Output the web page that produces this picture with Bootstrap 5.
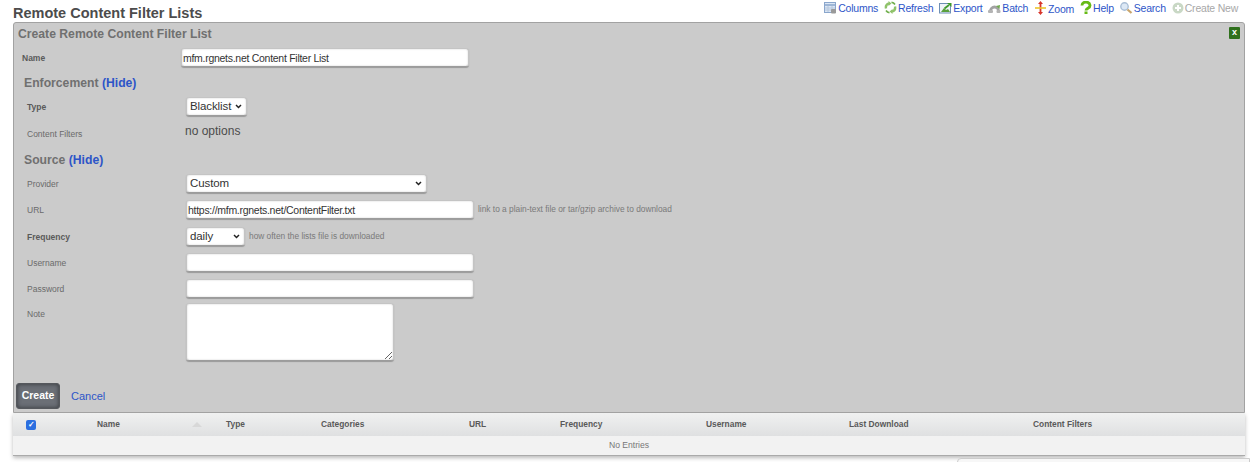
<!DOCTYPE html>
<html lang="en">
<head>
<meta charset="utf-8">
<title>Remote Content Filter Lists</title>
<link rel="stylesheet" href="https://cdn.jsdelivr.net/npm/bootstrap@5.3.0/dist/css/bootstrap.min.css">
<style>
html,body{height:462px;overflow:hidden;background:#fff}
body{font-family:"Liberation Sans",Arial,sans-serif;color:#444;position:relative}
.pg-top{height:22px;padding:0 12px 0 13px}
.pg-title{font-size:14.5px;font-weight:700;color:#4c4c4c;margin:5px 0 0;line-height:16px}
.act{font-size:10.5px;letter-spacing:-.22px;color:#2d55c8;text-decoration:none;line-height:14px}
.act.off{color:#a8a8a8}
.acts{gap:6px;padding-top:1px}
.act svg{vertical-align:-2px;margin-right:1px}
.panel{margin:0 5px 0 13px;height:391px;background:#cbcbcb;border:1px solid #a2a2a2;border-radius:3px 3px 0 0;position:relative;padding:0}
.p-title{font-size:12.2px;font-weight:700;color:#707070;margin:0;padding:4px 0 0 4px;line-height:14px;height:25px}
.x-btn{position:absolute;right:4px;top:4px;width:11px;height:12px;background:#2f701d;border-radius:1px;color:#fff;font-size:9px;font-weight:700;line-height:11px;text-align:center}
.frow{display:flex;align-items:center}
.lab{font-size:8.5px;color:#6a6a6a;flex:0 0 172px;padding:2px 0 0 13px}
.lab.nm{flex-basis:167px;padding-left:8px}
.lab.b{font-weight:700;color:#5a5a5a}
.inp{background:#fff;border:1px solid #c4c4c4;border-bottom-color:#9c9c9c;border-radius:3px;box-shadow:inset 0 0 2px #ccc,0 1px 1px #999;font-size:10.5px;letter-spacing:-.28px;color:#333;padding:0 1px;height:19px;display:block;font-family:inherit;outline:0}
select.inp{appearance:none;-webkit-appearance:none;padding:0 0 0 3px;font-size:11.5px;letter-spacing:-.1px;background-image:url("data:image/svg+xml,%3Csvg xmlns='http://www.w3.org/2000/svg' width='7' height='5'%3E%3Cpath d='M1 1l2.500 2.500L6 1' fill='none' stroke='%23222' stroke-width='1.500'/%3E%3C/svg%3E");background-repeat:no-repeat;background-position:right 4px center}
.sec{font-size:12.2px;font-weight:700;color:#707070;padding-left:10px;line-height:14px}
.sec a,.cancel{color:#2d55c8;text-decoration:none}
.hint{font-size:8.35px;color:#7a7a7a;margin-left:4px}
.noopt{font-size:12px;color:#4c4c4c;margin-left:-1px}
.foot{position:absolute;left:2px;bottom:3px;display:flex;align-items:center;gap:11px}
.btn-create{background:#6b6f76;border:1px solid #55585d;border-radius:3px;box-shadow:inset 0 0 4px #33363a;color:#fff;font-size:10.5px;font-weight:700;padding:0;width:44px;height:26px;font-family:inherit}
.cancel{font-size:11px}
.tbl-wrap{margin:0 5px 0 13px;box-shadow:0 2px 4px #bbb;border-bottom:1px solid #aaa}
.thead{height:23px;background:linear-gradient(#f0f1f1,#dfe0e1);display:grid;grid-template-columns:84px 96px 33px 95px 148px 91px 146px 143px 184px auto;align-items:center;font-size:8.4px;font-weight:700;color:#595959}
.chk{width:10px;height:10px;background:#2b6fe0;border-radius:2px;margin-left:13px;color:#fff;font-size:8px;line-height:10px;text-align:center}
.tri{width:0;height:0;border:5px solid transparent;border-top:0;border-bottom:5px solid #d8d8d8;margin-left:-1px}
.tbody{height:19px;background:#f2f2f2;text-align:center;font-size:8.6px;color:#777;line-height:18px}
.corner{position:absolute;left:957px;top:458px;width:293px;height:10px;background:#f7f7f7;border:1px solid #ccc;border-radius:4px 0 0 0}
</style>
</head>
<body>
<div class="pg-top d-flex justify-content-between">
  <h1 class="pg-title">Remote Content Filter Lists</h1>
  <div class="acts d-flex">
    <a class="act" href="#"><svg width="13" height="12" viewBox="0 0 13 12"><rect x=".5" y=".5" width="11" height="10" fill="#dbe6f4" stroke="#8aa6cc"/><path d="M1 3h10" stroke="#8aa6cc" stroke-width="1.500"/><path d="M4 4v6M8 4v6M1 6h10M1 8h10" stroke="#b5c6dc"/><rect x="7" y="7" width="5" height="4.500" rx="1" fill="#9a9a9a"/></svg>Columns</a>
    <a class="act" href="#"><svg width="13" height="13" viewBox="0 0 13 13"><path d="M2 7.500A4.500 4.500 0 0 1 5 2.300" fill="none" stroke="#8fc26a" stroke-width="2.400"/><path d="M4.500 0l3 2.500-3 2.500z" fill="#8fc26a"/><path d="M11 5.500A4.500 4.500 0 0 1 8 10.700" fill="none" stroke="#8fc26a" stroke-width="2.400"/><path d="M8.500 13l-3-2.500 3-2.500z" fill="#8fc26a"/><path d="M7.500 1.200A5 5 0 0 1 11 3.500M5.500 11.800A5 5 0 0 1 2 9.500" fill="none" stroke="#6fae4a" stroke-width="1.600"/></svg>Refresh</a>
    <a class="act" href="#"><svg width="13" height="12" viewBox="0 0 13 12"><rect x=".5" y="1.500" width="11" height="9.500" fill="#eef3f8" stroke="#6e8fb5"/><path d="M2 10l3-4 2 2 2-1 2 3z" fill="#5aa03c"/><path d="M5.500 6.500L10 3" stroke="#3e9a2a" stroke-width="1.800" fill="none"/><path d="M8 1h4.500v4z" fill="#3e9a2a"/></svg>Export</a>
    <a class="act" href="#"><svg width="13" height="12" viewBox="0 0 13 12"><path d="M2.500 9a4 4 0 0 1 8 0" fill="none" stroke="#a2a2a2" stroke-width="2.800"/><path d="M8 4l4-1-.5 4z" fill="#6fa84f"/><rect x="0" y="8" width="5" height="3" rx="1" fill="#b4b4b4"/><rect x="8.500" y="8" width="4" height="3" rx="1" fill="#b4b4b4"/></svg>Batch</a>
    <a class="act" href="#"><svg width="13" height="14" viewBox="0 0 13 14"><path d="M6.500 2v10" stroke="#d8352a" stroke-width="1.800"/><path d="M1 7h11" stroke="#ecc52c" stroke-width="1.600"/><path d="M6.500 0l2.500 3H4zM6.500 14L4 11h5z" fill="#d8352a"/></svg>Zoom</a>
    <a class="act" href="#"><svg width="12" height="13" viewBox="0 0 12 13"><path d="M2 4.500a4 3.300 0 1 1 6.300 2.500C6.800 8 6 8.200 6 9.500" fill="none" stroke="#67ba15" stroke-width="2.800"/><rect x="4.500" y="10.500" width="3" height="2.500" fill="#67ba15"/></svg>Help</a>
    <a class="act" href="#"><svg width="13" height="12" viewBox="0 0 13 12"><circle cx="4.500" cy="4.500" r="3.700" fill="#dce8f5" stroke="#a9bed6" stroke-width="1.400"/><path d="M7.500 7.500l4 3.500" stroke="#c9a56b" stroke-width="2.200"/></svg>Search</a>
    <a class="act off" href="#"><svg width="12" height="12" viewBox="0 0 12 12"><circle cx="6" cy="6" r="5.500" fill="#c9d8c5"/><path d="M6 3v6M3 6h6" stroke="#fff" stroke-width="2"/></svg>Create New</a>
  </div>
</div>
<div class="panel">
  <div class="x-btn">x</div>
  <h2 class="p-title">Create Remote Content Filter List</h2>
  <div class="frow" style="height:19px"><span class="lab b nm">Name</span><input class="inp" style="width:288px" value="mfm.rgnets.net Content Filter List" aria-label="Name"></div>
  <div class="sec" style="margin-top:9px">Enforcement <a href="#">(Hide)</a></div>
  <div class="frow" style="margin-top:6px;height:20px"><span class="lab b">Type</span><select class="inp" style="width:61px" aria-label="Type"><option>Blacklist</option></select></div>
  <div class="frow" style="margin-top:4px;height:22px"><span class="lab" style="padding-top:6px">Content Filters</span><span class="noopt">no options</span></div>
  <div class="sec" style="margin-top:11px">Source <a href="#">(Hide)</a></div>
  <div class="frow" style="margin-top:7px;height:19px"><span class="lab">Provider</span><select class="inp" style="width:241px" aria-label="Provider"><option>Custom</option></select></div>
  <div class="frow" style="margin-top:7px;height:19px"><span class="lab">URL</span><input class="inp" style="width:288px" value="https://mfm.rgnets.net/ContentFilter.txt" aria-label="URL"><span class="hint">link to a plain-text file or tar/gzip archive to download</span></div>
  <div class="frow" style="margin-top:7px;height:20px"><span class="lab b">Frequency</span><select class="inp" style="width:59px" aria-label="Frequency"><option>daily</option></select><span class="hint">how often the lists file is downloaded</span></div>
  <div class="frow" style="margin-top:7px;height:19px"><span class="lab">Username</span><input class="inp" style="width:288px" aria-label="Username"></div>
  <div class="frow" style="margin-top:7px;height:19px"><span class="lab">Password</span><input class="inp" style="width:288px" aria-label="Password"></div>
  <div class="frow align-items-start" style="margin-top:5px"><span class="lab" style="padding-top:5px">Note</span><textarea class="inp" style="width:208px;height:58px" aria-label="Note"></textarea></div>
  <div class="foot"><button class="btn-create" type="button">Create</button><a class="cancel" href="#">Cancel</a></div>
</div>
<div class="tbl-wrap">
  <div class="thead">
    <div><div class="chk">&#10003;</div></div><div>Name</div><div><div class="tri"></div></div><div>Type</div><div>Categories</div><div>URL</div><div>Frequency</div><div>Username</div><div>Last Download</div><div>Content Filters</div>
  </div>
  <div class="tbody">No Entries</div>
</div>
<div class="corner"></div>
</body>
</html>
